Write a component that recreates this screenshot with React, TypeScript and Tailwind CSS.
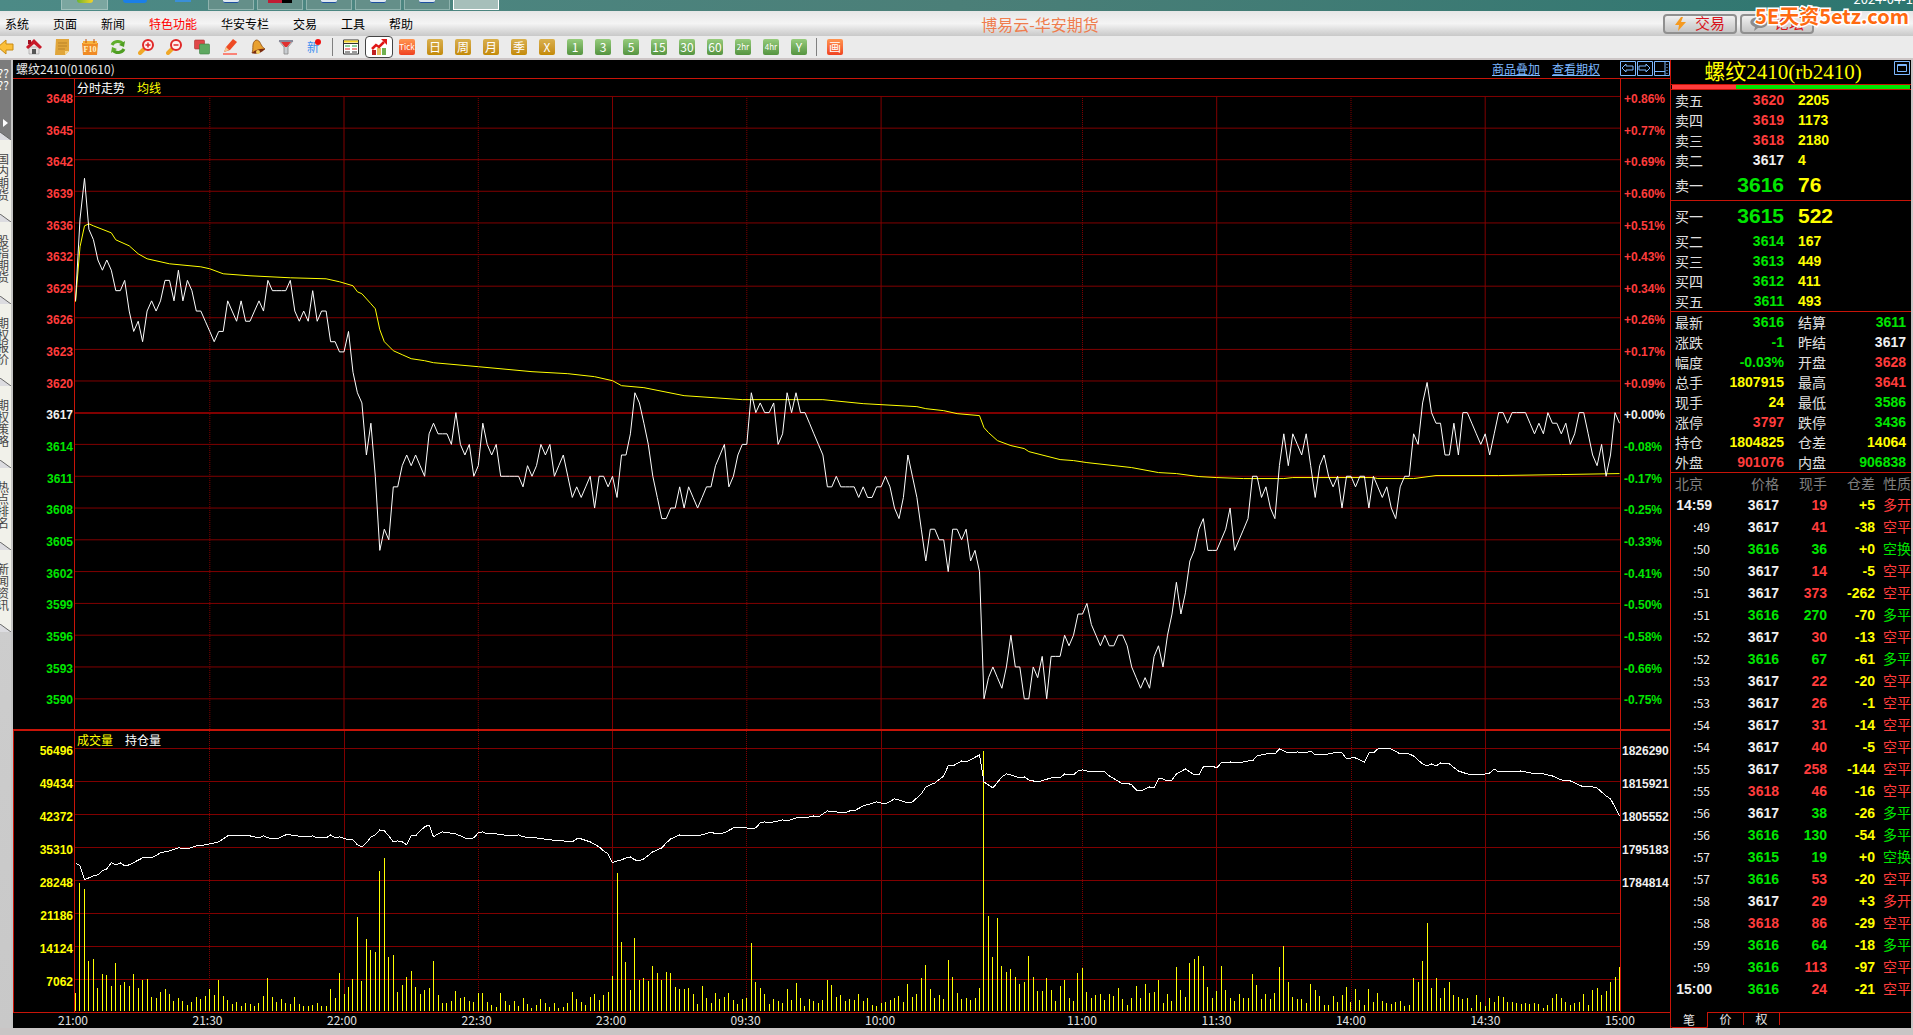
import type { ReactNode } from 'react'
import clsx from 'clsx'

type Tone = 'r' | 'g' | 'w' | 'y'

const tones: Record<Tone, string> = {
  r: 'text-[#ff3c3c]',
  g: 'text-[#00e600]',
  w: 'text-[#f0f0f0]',
  y: 'text-[#ffff00]',
}

// Price per minute, in ticks away from the previous settlement (3617)
const prices = [
  11, 19, 23, 18, 17, 15, 14, 15, 14, 12, 12, 13, 10, 8, 9, 7, 10, 11, 10, 11, 13, 13, 11, 14, 11, 13, 12, 10, 10, 9,
  8, 7, 8, 8, 11, 10, 9, 11, 9, 9, 10, 11, 10, 13, 12, 12, 12, 12, 13, 10, 9, 10, 9, 12, 9, 10, 10, 7, 7, 6,
  6, 8, 4, 2, 1, -4, -1, -6, -13, -11, -12, -7, -7, -5, -4, -5, -4, -5, -6, -2, -1, -2, -2, -2, -3, 0, -3, -4, -3, -6,
  -5, -1, -3, -4, -3, -6, -6, -6, -6, -6, -7, -5, -6, -5, -3, -4, -3, -6, -5, -4, -6, -8, -7, -8, -7, -6, -9, -6, -6, -7,
  -6, -8, -4, -4, -2, 2, 1, -1, -3, -6, -8, -10, -10, -9, -9, -7, -9, -7, -8, -9, -8, -7, -7, -5, -4, -3, -7, -6, -4, -3,
  -3, 2, 0, 1, 0, 0, 1, -3, -2, 2, 0, 2, 0, 0, -1, -2, -3, -4, -7, -7, -6, -7, -7, -7, -7, -8, -7, -8, -8, -7,
  -7, -6, -7, -9, -10, -8, -4, -6, -8, -11, -14, -11, -11, -12, -12, -15, -11, -11, -12, -11, -14, -13, -15, -27, -25,
  -24, -25, -26, -24, -21, -24, -24, -27, -27, -24, -25, -23, -27, -23, -23, -23, -21, -22, -21, -19, -19, -18, -20,
  -21, -22, -21, -22, -22, -21, -21, -22, -24, -25, -26, -25, -26, -23, -22, -24, -21, -19, -16, -19, -17, -14, -13,
  -11, -10, -13, -13, -13, -12, -11, -9, -13, -12, -11, -10, -6, -6, -8, -7, -9, -10, -5, -2, -5, -2, -3, -4, -2, -5,
  -8, -5, -4, -6, -7, -6, -9, -6, -6, -7, -6, -6, -9, -6, -7, -8, -7, -9, -10, -7, -6, -6, -2, -3, 1, 3, 0, -1, -1, -4,
  -4, -1, -4, 0, 0, -1, -2, -3, -2, -4, -2, 0, 0, -1, 0, 0, 0, 0, -1, -2, -1, -2, 0, -1, -1, -2, -1, -3, -2, 0, 0, -2,
  -4, -5, -3, -6, -4, 0, -1,
]

// Running average: [minute, y]
const average: number[][] = [
  [0, 302], [1, 247], [2, 226], [3, 224], [4, 226], [8, 233], [9, 240], [12, 246], [14, 254], [16, 259], [21, 264],
  [28, 267], [30, 269], [33, 274], [39, 276], [48, 278], [56, 279], [59, 282], [62, 286], [63, 292], [64, 294],
  [66, 304], [67, 309], [68, 330], [69, 342], [71, 351], [73, 355], [75, 359], [78, 361], [80, 363], [90, 367],
  [102, 372], [110, 374], [116, 377], [120, 381], [122, 386], [127, 388], [136, 396], [149, 400], [167, 400],
  [176, 404], [188, 407], [190, 409], [194, 411], [197, 414], [202, 416], [203, 428], [204, 433], [206, 441],
  [209, 446], [212, 449], [213, 452], [220, 460], [223, 461], [226, 463], [236, 468], [242, 473], [246, 474],
  [251, 477], [255, 478], [261, 479], [270, 479], [272, 478], [290, 478], [291, 479], [299, 479], [304, 476],
  [318, 476], [332, 475], [345, 474],
]

// Bar height per minute
const volumes = [
  18, 128, 122, 50, 52, 23, 37, 36, 25, 48, 26, 29, 25, 37, 23, 31, 32, 14, 13, 19, 22, 17, 10, 13, 10, 6, 9, 14, 12, 15,
  22, 16, 31, 15, 11, 7, 9, 5, 8, 7, 5, 8, 15, 33, 14, 9, 12, 8, 7, 14, 7, 5, 5, 6, 8, 5, 5, 22, 13, 38,
  17, 24, 32, 94, 30, 72, 61, 59, 140, 153, 54, 56, 19, 26, 34, 40, 24, 17, 21, 23, 50, 16, 8, 8, 10, 20, 13, 14, 10, 9,
  18, 18, 9, 6, 4, 18, 10, 6, 10, 5, 13, 7, 3, 6, 12, 8, 4, 8, 3, 4, 8, 19, 12, 9, 6, 14, 17, 11, 16, 19,
  35, 138, 69, 49, 21, 73, 31, 33, 30, 45, 38, 31, 39, 38, 24, 22, 22, 23, 17, 7, 25, 13, 8, 18, 12, 14, 18, 11, 7, 12,
  13, 68, 29, 23, 17, 7, 12, 10, 8, 22, 11, 28, 13, 5, 12, 10, 8, 11, 31, 26, 14, 16, 10, 12, 11, 17, 10, 13, 6, 5,
  8, 9, 11, 13, 15, 9, 27, 14, 17, 33, 46, 22, 13, 16, 12, 51, 34, 18, 12, 13, 11, 13, 23, 260, 95, 54, 93, 45, 39, 42,
  34, 27, 29, 55, 34, 20, 20, 33, 21, 10, 25, 31, 13, 10, 38, 43, 19, 13, 16, 17, 11, 17, 15, 23, 12, 6, 13, 25, 13, 27,
  18, 19, 31, 8, 17, 10, 44, 21, 14, 48, 52, 55, 45, 24, 13, 20, 45, 21, 13, 10, 17, 13, 13, 37, 26, 12, 17, 12, 18, 44,
  65, 29, 14, 12, 12, 8, 27, 21, 15, 6, 6, 15, 9, 16, 24, 9, 22, 11, 6, 22, 9, 18, 10, 8, 7, 9, 10, 5, 6, 33,
  29, 50, 88, 23, 33, 13, 23, 29, 16, 14, 12, 13, 3, 16, 9, 5, 13, 9, 15, 14, 9, 9, 8, 7, 8, 7, 8, 7, 3, 6,
  13, 17, 13, 9, 6, 8, 9, 17, 6, 21, 23, 16, 20, 29, 34, 44,
]

// Open interest: [minute, y]
const interest: number[][] = [
  [0, 864], [1, 867], [2, 881], [4, 877], [5, 876], [6, 872], [7, 870], [8, 864], [9, 866], [10, 864], [11, 867],
  [12, 866], [15, 859], [17, 859], [19, 854], [21, 852], [23, 849], [25, 850], [27, 847], [29, 846], [32, 843],
  [34, 837], [39, 837], [41, 839], [42, 837], [43, 839], [45, 840], [47, 836], [48, 836], [51, 838], [53, 837],
  [54, 839], [56, 839], [57, 836], [58, 839], [59, 838], [61, 841], [62, 841], [63, 846], [64, 848], [65, 844],
  [66, 838], [67, 836], [68, 831], [69, 832], [70, 837], [71, 843], [72, 842], [73, 843], [74, 846], [75, 837],
  [76, 837], [77, 832], [78, 828], [79, 826], [80, 838], [81, 835], [82, 833], [85, 835], [86, 837], [87, 839],
  [88, 840], [89, 839], [90, 834], [91, 833], [92, 835], [94, 835], [97, 837], [99, 836], [100, 838], [103, 839],
  [106, 841], [109, 842], [111, 843], [112, 840], [113, 840], [115, 843], [117, 848], [118, 852], [119, 855],
  [120, 864], [121, 862], [122, 861], [123, 859], [124, 858], [125, 861], [126, 862], [127, 860], [129, 853],
  [131, 849], [132, 844], [133, 840], [135, 836], [136, 837], [138, 837], [140, 836], [142, 833], [143, 835],
  [145, 834], [147, 829], [150, 829], [151, 830], [152, 829], [153, 824], [154, 823], [155, 824], [158, 821],
  [159, 822], [161, 819], [163, 819], [165, 817], [166, 818], [168, 812], [170, 813], [172, 814], [173, 812],
  [174, 812], [176, 807], [179, 803], [181, 805], [183, 800], [184, 801], [186, 804], [187, 803], [188, 799],
  [189, 795], [190, 788], [192, 784], [194, 777], [195, 767], [196, 767], [198, 762], [199, 763], [202, 756],
  [203, 783], [204, 786], [205, 789], [207, 778], [208, 775], [209, 776], [211, 779], [212, 778], [213, 781],
  [215, 783], [218, 779], [220, 779], [221, 775], [223, 776], [224, 772], [225, 771], [227, 773], [230, 773],
  [231, 777], [234, 785], [235, 784], [236, 786], [237, 791], [238, 792], [240, 788], [241, 789], [242, 780],
  [243, 780], [244, 782], [245, 781], [246, 775], [248, 770], [250, 776], [251, 776], [252, 768], [254, 767],
  [255, 769], [256, 764], [258, 763], [260, 764], [262, 762], [263, 762], [264, 757], [266, 755], [268, 755],
  [269, 750], [271, 754], [273, 753], [275, 754], [276, 752], [277, 756], [279, 756], [281, 754], [283, 754],
  [284, 760], [285, 759], [286, 759], [288, 763], [289, 754], [290, 754], [291, 750], [294, 750], [296, 755],
  [298, 755], [299, 757], [301, 765], [302, 767], [303, 765], [304, 767], [305, 764], [307, 765], [309, 772],
  [311, 775], [314, 776], [316, 774], [317, 770], [318, 773], [321, 773], [323, 772], [325, 774], [328, 775],
  [330, 777], [332, 781], [334, 782], [337, 788], [339, 788], [340, 789], [341, 793], [342, 797], [343, 800],
  [344, 808], [345, 817],
]

const STEP = 1544 / 345
const mx = (m: number) => 0.5 + m * STEP
const priceY = (p: number) => (p > 0 ? 413.5 - p * 10.22 : 413 - p * 10.61)
const toPoints = (d: number[][]) => d.map(([m, y]) => `${mx(m).toFixed(1)},${y}`).join(' ')

const pricePoints = prices.map((p, m) => `${mx(m).toFixed(1)},${priceY(p).toFixed(1)}`).join(' ')

const priceScale = [3648, 3645, 3642, 3639, 3636, 3632, 3629, 3626, 3623, 3620, 3617, 3614, 3611, 3608, 3605, 3602, 3599, 3596, 3593, 3590]
const pctScale = ['+0.86%', '+0.77%', '+0.69%', '+0.60%', '+0.51%', '+0.43%', '+0.34%', '+0.26%', '+0.17%', '+0.09%', '+0.00%', '-0.08%', '-0.17%', '-0.25%', '-0.33%', '-0.41%', '-0.50%', '-0.58%', '-0.66%', '-0.75%']
const volumeScale = [56496, 49434, 42372, 35310, 28248, 21186, 14124, 7062]
const interestScale = ['1826290', '1815921', '1805552', '1795183', '1784814', '', '', '']

const times = [
  { t: '21:00', gap: 0 },
  { t: '21:30', gap: 30 },
  { t: '22:00', gap: 30 },
  { t: '22:30', gap: 30 },
  { t: '23:00', gap: 30 },
  { t: '09:30', gap: 30 },
  { t: '10:00', gap: 30 },
  { t: '11:00', gap: 45 },
  { t: '11:30', gap: 30 },
  { t: '14:00', gap: 30 },
  { t: '14:30', gap: 30 },
  { t: '15:00', gap: 30 },
]

const asks: [string, string, string, Tone][] = [
  ['卖五', '3620', '2205', 'r'],
  ['卖四', '3619', '1173', 'r'],
  ['卖三', '3618', '2180', 'r'],
  ['卖二', '3617', '4', 'w'],
  ['卖一', '3616', '76', 'g'],
]
const bids: [string, string, string, Tone][] = [
  ['买一', '3615', '522', 'g'],
  ['买二', '3614', '167', 'g'],
  ['买三', '3613', '449', 'g'],
  ['买四', '3612', '411', 'g'],
  ['买五', '3611', '493', 'g'],
]

const stats: [string, string, Tone, string, string, Tone][] = [
  ['最新', '3616', 'g', '结算', '3611', 'g'],
  ['涨跌', '-1', 'g', '昨结', '3617', 'w'],
  ['幅度', '-0.03%', 'g', '开盘', '3628', 'r'],
  ['总手', '1807915', 'y', '最高', '3641', 'r'],
  ['现手', '24', 'y', '最低', '3586', 'g'],
  ['涨停', '3797', 'r', '跌停', '3436', 'g'],
  ['持仓', '1804825', 'y', '仓差', '14064', 'y'],
  ['外盘', '901076', 'r', '内盘', '906838', 'g'],
]

const trades: [string, string, Tone, string, Tone, string, string][] = [
  ['14:59', '3617', 'w', '19', 'r', '+5', '多开'],
  [':49', '3617', 'w', '41', 'r', '-38', '空平'],
  [':50', '3616', 'g', '36', 'g', '+0', '空换'],
  [':50', '3617', 'w', '14', 'r', '-5', '空平'],
  [':51', '3617', 'w', '373', 'r', '-262', '空平'],
  [':51', '3616', 'g', '270', 'g', '-70', '多平'],
  [':52', '3617', 'w', '30', 'r', '-13', '空平'],
  [':52', '3616', 'g', '67', 'g', '-61', '多平'],
  [':53', '3617', 'w', '22', 'r', '-20', '空平'],
  [':53', '3617', 'w', '26', 'r', '-1', '空平'],
  [':54', '3617', 'w', '31', 'r', '-14', '空平'],
  [':54', '3617', 'w', '40', 'r', '-5', '空平'],
  [':55', '3617', 'w', '258', 'r', '-144', '空平'],
  [':55', '3618', 'r', '46', 'r', '-16', '空平'],
  [':56', '3617', 'w', '38', 'g', '-26', '多平'],
  [':56', '3616', 'g', '130', 'g', '-54', '多平'],
  [':57', '3615', 'g', '19', 'g', '+0', '空换'],
  [':57', '3616', 'g', '53', 'r', '-20', '空平'],
  [':58', '3617', 'w', '29', 'r', '+3', '多开'],
  [':58', '3618', 'r', '86', 'r', '-29', '空平'],
  [':59', '3616', 'g', '64', 'g', '-18', '多平'],
  [':59', '3616', 'g', '113', 'r', '-97', '空平'],
  ['15:00', '3616', 'g', '24', 'r', '-21', '空平'],
]

const menu = ['系统', '页面', '新闻', '特色功能', '华安专栏', '交易', '工具', '帮助']
const sideTabs = ['国内期货', '股指期货', '期权报价', '期权策略', '热点排名', '新闻资讯']

function Icon({ children }: { children: ReactNode }) {
  return <svg width="16" height="16" viewBox="0 0 16 16" aria-hidden="true">{children}</svg>
}

const drawnTools: { name: string; icon: ReactNode }[] = [
  { name: '后退', icon: <path d="M0 8 8 1v4h7v6H8v4z" fill="#fbbf3a" stroke="#c98a10" /> },
  {
    name: '首页',
    icon: (
      <>
        <path d="M3 8h10v7H3z" fill="#e8e4e4" stroke="#999" strokeWidth=".6" />
        <path d="M0 8 8 0l8 8-2 2-6-5-6 5z" fill="#c81828" />
        <path d="M2 1h3v4H2z" fill="#a01020" />
        <path d="M6 10h4v5H6z" fill="#555" />
      </>
    ),
  },
  {
    name: '公告',
    icon: (
      <>
        <path d="M2 0h13v12l-4 4H1z" fill="#e0a53a" />
        <path d="M4 4h9M4 7h9M4 10h7" stroke="#b98228" />
        <path d="M11 16v-4h4z" fill="#f7d68a" />
      </>
    ),
  },
  {
    name: 'F10',
    icon: (
      <>
        <path d="M0 4h16l-1 12H1z" fill="#f08a24" />
        <path d="M1 2h14v3H1z" fill="#f7b13c" />
        <path d="M4 0v4M12 0v4" stroke="#c05010" />
        <text x="8" y="13" textAnchor="middle" fontSize="8" fontWeight="bold" fill="#fff4c8" fontFamily="Liberation Serif, serif">F10</text>
      </>
    ),
  },
  {
    name: '刷新',
    icon: (
      <>
        <path d="M2 6c2-4 8-5 11-1" fill="none" stroke="#5fae2c" strokeWidth="3" />
        <path d="m15 2-1 6-5-2z" fill="#4f9e22" />
        <path d="M14 10c-2 4-8 5-11 1" fill="none" stroke="#4f9e22" strokeWidth="3" />
        <path d="m1 14 1-6 5 2z" fill="#5fae2c" />
      </>
    ),
  },
  {
    name: '放大',
    icon: (
      <>
        <path d="m2 14 4-4" stroke="#f0a828" strokeWidth="4" strokeLinecap="round" />
        <circle cx="10" cy="6" r="5" fill="#fff0f0" stroke="#e02828" strokeWidth="2" />
        <path d="M7.500 6h5M10 3.500v5" stroke="#e02828" strokeWidth="1.500" />
      </>
    ),
  },
  {
    name: '缩小',
    icon: (
      <>
        <path d="m2 14 4-4" stroke="#f0a828" strokeWidth="4" strokeLinecap="round" />
        <circle cx="10" cy="6" r="5" fill="#fff0f0" stroke="#e02828" strokeWidth="2" />
        <path d="M7.500 6h5" stroke="#e02828" strokeWidth="1.500" />
      </>
    ),
  },
  {
    name: '叠加',
    icon: (
      <>
        <rect x=".5" y="1" width="10" height="9" rx="1" fill="#e04848" stroke="#a83030" strokeWidth=".6" />
        <rect x="5.500" y="5" width="10" height="10" rx="1" fill="#5fa860" stroke="#3d8040" strokeWidth=".6" />
      </>
    ),
  },
  {
    name: '画线',
    icon: (
      <>
        <path d="m2 13 2-5 7-8 4 3-7 8z" fill="#ee4a24" />
        <path d="m2 13 2-5 3 3z" fill="#f5c890" />
        <path d="M1 15h14" stroke="#ff6050" strokeWidth="1.500" />
      </>
    ),
  },
  {
    name: '预警',
    icon: (
      <>
        <path d="M6 1c5 0 4 6 9 9L2 14C4 9 1 4 6 1z" fill="#e8a030" stroke="#8a4a10" strokeWidth=".8" />
        <path d="M2 14c3 2 10 0 13-4-4-1-11 1-13 4z" fill="#7a2c10" />
        <circle cx="8" cy="13" r="2" fill="#f5d060" />
      </>
    ),
  },
  {
    name: '筛选',
    icon: (
      <>
        <path d="M1 2h14L10 8v7H6V8z" fill="#c8ccd0" stroke="#888" strokeWidth=".8" />
        <path d="M3 3h10l-4 5H7z" fill="#e03030" />
        <path d="M1 2h14" stroke="#889" strokeWidth="2" />
      </>
    ),
  },
]

const periods = [
  { t: '日', c: 'gold' }, { t: '周', c: 'gold' }, { t: '月', c: 'gold' }, { t: '季', c: 'gold' }, { t: 'X', c: 'gold' },
  { t: '1', c: 'green' }, { t: '3', c: 'green' }, { t: '5', c: 'green' }, { t: '15', c: 'green' }, { t: '30', c: 'green' },
  { t: '60', c: 'green' }, { t: '2hr', c: 'green' }, { t: '4hr', c: 'green' }, { t: 'Y', c: 'green' },
]

function Badge({ text, color }: { text: string; color: string }) {
  return (
    <button className="flex w-7 justify-center">
      <span
        className={clsx(
          'flex h-4 w-4 items-center justify-center rounded-xs leading-none whitespace-nowrap text-white',
          text.length > 2 ? 'text-[8px]' : 'text-xs',
          color === 'gold' && 'bg-linear-to-b from-[#d9b04c] to-[#c48a00]',
          color === 'green' && 'bg-linear-to-b from-[#96cc7c] to-[#559440]',
          color === 'orange' && 'bg-linear-to-b from-[#ff9450] to-[#f04020]',
        )}
      >
        {text}
      </span>
    </button>
  )
}

function Taskbar() {
  return (
    <div className="flex h-[11px] items-start gap-[3px] overflow-hidden bg-linear-to-r from-[#4c8a86] via-[#4b7f78] to-[#2c7670] pl-[61px]">
      <div className="flex h-[10px] w-[47px] justify-center border border-t-0 border-[#9fc0bb] bg-[#7ba6a0]">
        <span className="h-[3px] w-4 rounded-b-full bg-linear-to-r from-[#6bb52c] to-[#f5d328]" />
      </div>
      <div className="flex w-[94px] items-start gap-7 pl-3">
        <span className="h-[3px] w-6 rounded-b-full bg-[#1b7fe8]" />
        <span className="h-[2px] w-4 bg-[#3a8fd8]" />
      </div>
      {[0, 1, 2, 3, 4].map(i => (
        <div key={i} className="flex h-[10px] w-[46px] shrink-0 justify-center border border-t-0 border-[#8fb3ae] bg-[#648f89]">
          <span className={clsx('h-[3px]', i === 1 ? 'w-6 bg-linear-to-r from-[#c01c34] from-60% to-black to-60%' : 'w-4 rounded-b-xs border-b border-[#1d4fa0] bg-[#dfe8f0]')} />
        </div>
      ))}
      <div className="h-[10px] w-[46px] border border-t-0 border-white bg-[#a6bfba]" />
      <span className="-mt-[9px] ml-auto text-[13px] leading-4 whitespace-nowrap text-white">2024-04-1</span>
    </div>
  )
}

function MenuBar() {
  return (
    <header className="relative flex h-[25px] items-center bg-linear-to-b from-[#e6e6e6] via-[#f4f4f4] to-[#c8c8c8] pl-[5px]">
      <nav className="flex gap-6 text-xs">
        {menu.map(m => (
          <button key={m} className={m === '特色功能' ? 'text-[#f00]' : 'text-black'}>{m}</button>
        ))}
      </nav>
      <h1 className="flex-1 pl-1 text-center text-base leading-6 text-[#ef7d4e]">博易云-华安期货</h1>
      <div className="mr-[99px] flex gap-[3px]">
        <button className="flex h-5 w-[74px] items-center justify-center gap-2 rounded border-2 border-[#909090] bg-linear-to-b from-[#f0f0f0] to-[#c4c4c4] text-[15px] text-[#d8141c]">
          <svg width="12" height="14" viewBox="0 0 12 14" aria-hidden="true"><path d="M6 0 0 8h4l-1 6 8-9H6l2-5z" fill="#f59a20" /></svg>
          交易
        </button>
        <button className="flex h-5 w-[74px] items-center justify-center gap-1.5 rounded border-2 border-[#909090] bg-linear-to-b from-[#f0f0f0] to-[#c4c4c4] text-[15px] text-[#d8141c]">
          <svg width="18" height="14" viewBox="0 0 18 14" aria-hidden="true">
            <path d="M9 0c12 0 11 11 1 11H8l-4 3 1-4C-3 7 0 0 9 0z" fill="#8c8c8c" />
            <path d="M5 6h2M8 6h2M11 6h2" stroke="#fff" strokeWidth="2" />
          </svg>
          论坛
        </button>
      </div>
      <div className="absolute -top-[9px] right-1 text-[20px] leading-[28px] font-bold whitespace-nowrap text-[#ff6a10] [paint-order:stroke] [-webkit-text-stroke:3px_#fff]">
        5E天资5etz.com
      </div>
    </header>
  )
}

function Toolbar() {
  return (
    <div className="flex h-6 items-center overflow-hidden border-b-2 border-[#cdc6c6] bg-[#ebebeb]">
      <div className="-ml-2 flex items-center">
        {drawnTools.map(t => (
          <button key={t.name} aria-label={t.name} className="flex w-7 justify-center"><Icon>{t.icon}</Icon></button>
        ))}
        <button className="flex w-7 justify-center">
          <span className="flex text-xs leading-4 text-[#3c8ef0]">
            新<span className="-ml-1 h-1.5 w-1.5 rounded-full bg-[#f01010]" />
          </span>
        </button>
        <div className="mx-1 h-[18px] w-px bg-[#808080]" />
        <button aria-label="报价" className="flex w-7 justify-center">
          <Icon>
            <path d="M.500 1h15v14H.500z" fill="#fff" stroke="#333" />
            <path d="M1 1.500h14v2H1z" fill="#f5d328" />
            <path d="M2 7h5M9 7h5" stroke="#18a030" />
            <path d="M2 10h5M9 10h5" stroke="#e02020" />
            <path d="M2 13h5M9 13h5M1 4.500h14" stroke="#333" />
          </Icon>
        </button>
        <button aria-label="分时" className="flex h-[22px] w-7 items-center justify-center rounded border border-[#444] bg-white">
          <Icon>
            <path d="M1 11h4v5H1z" fill="#c02020" />
            <path d="M6 9h4v7H6z" fill="#e8c060" />
            <path d="M11 9h4v7h-4z" fill="#70b050" />
            <path d="m1 10 4-4 3 2 5-5" fill="none" stroke="#e01818" strokeWidth="2.500" />
            <path d="M10 0h6v6z" fill="#e01818" />
          </Icon>
        </button>
        <Badge text="Tick" color="orange" />
        {periods.map(p => <Badge key={p.t} text={p.t} color={p.c} />)}
        <div className="mr-1 ml-[3px] h-[18px] w-px bg-[#808080]" />
        <Badge text="画" color="orange" />
      </div>
    </div>
  )
}

function SideTabs() {
  return (
    <aside className="w-[13px] shrink-0 overflow-hidden border-r-2 border-[#c4c4c4] bg-linear-to-b from-[#d4d4d4] to-[#c8c8c8] text-xs leading-3">
      <div className="relative flex h-20 flex-col items-end bg-[#7c7c7c] pt-[7px] pr-0.5 text-white">
        <span>??</span>
        <span>??</span>
        <svg className="mt-7" width="7" height="8" viewBox="0 0 7 8" aria-hidden="true"><path d="M1 0v8l5-4z" fill="#fff" /></svg>
        <TabEdge />
      </div>
      {sideTabs.map(t => (
        <button key={t} className="relative block h-[82px] w-full bg-[#f1f1ea] pb-2 text-[#444]">
          <span className="-ml-[3px] block w-3 break-all">{t}</span>
          <TabEdge />
        </button>
      ))}
    </aside>
  )
}

function TabEdge() {
  return (
    <svg className="absolute bottom-0 left-0" width="11" height="8" viewBox="0 0 11 8" aria-hidden="true">
      <path d="M0 0v8h11z" fill="#dcdce0" />
      <path d="M0 0l11 8" stroke="#666" />
    </svg>
  )
}

function GridColumns({ top, bottom }: { top: number; bottom: number }) {
  let m = 0
  return (
    <>
      {times.slice(1, -1).map(({ t, gap }, i) => {
        m += gap
        return <path key={t} d={`M${mx(m).toFixed(1)} ${top}V${bottom}`} strokeDasharray={i === 6 || (i < 6 && i % 2 === 0) || i === 8 ? '1 1' : undefined} />
      })}
    </>
  )
}

function AxisLabels({ items, className }: { items: (string | number)[]; className: string }) {
  return (
    <div className={clsx('flex shrink-0 flex-col justify-between font-[Liberation_Sans,sans-serif] text-xs leading-4 font-bold', className)}>
      {items.map((v, i) => <span key={i} className="h-4">{v}</span>)}
    </div>
  )
}

function priceTone(i: number) {
  return i < 10 ? tones.r : i === 10 ? tones.w : tones.g
}

function ToneLabels({ items, className }: { items: (string | number)[]; className: string }) {
  return (
    <div className={clsx('flex shrink-0 flex-col justify-between pt-3 pb-[21px] font-[Liberation_Sans,sans-serif] text-xs leading-4 font-bold', className)}>
      {items.map((v, i) => <span key={v} className={priceTone(i)}>{v}</span>)}
    </div>
  )
}

function PriceChart() {
  return (
    <section className="flex flex-[651_1_0px] border-b-2 border-[#c81408]">
      <ToneLabels items={priceScale} className="w-[61px] pr-px text-right" />
      <div className="relative flex-1 border-x border-[#c81408]">
        <svg className="absolute inset-0 h-full w-full" viewBox="0 79 1545 651" preserveAspectRatio="none" shapeRendering="crispEdges" role="img" aria-label="分时走势">
          <g stroke="#800000" fill="none" className="*:[vector-effect:non-scaling-stroke]">
            {priceScale.map((p, i) => {
              const y = i <= 10 ? 96.5 + i * 31.65 : 413 + (i - 10) * 31.83
              return <path key={p} d={`M0 ${y.toFixed(1)}H1545`} strokeWidth={p === 3617 ? 2 : 1} />
            })}
            <GridColumns top={96} bottom={730} />
          </g>
          <polyline points={toPoints(average)} fill="none" stroke="#ff0" vectorEffect="non-scaling-stroke" />
          <polyline points={pricePoints} fill="none" stroke="#fff" vectorEffect="non-scaling-stroke" />
        </svg>
        <div className="absolute top-0 left-0.5 flex gap-3 text-xs leading-[18px] text-white">
          <span>分时走势</span>
          <span className="text-[#ff0]">均线</span>
        </div>
      </div>
      <ToneLabels items={pctScale} className="w-[49px] pl-[3px]" />
    </section>
  )
}

function VolumeChart() {
  return (
    <section className="flex flex-[281_1_0px] border-b border-l border-[#c81408]">
      <AxisLabels items={volumeScale} className="w-[60px] pt-3 pr-px pb-[22px] text-right text-[#ff0]" />
      <div className="relative flex-1 border-x border-[#c81408]">
        <svg className="absolute inset-0 h-full w-full" viewBox="0 732 1545 281" preserveAspectRatio="none" shapeRendering="crispEdges" role="img" aria-label="成交量">
          <g stroke="#800000" fill="none" className="*:[vector-effect:non-scaling-stroke]">
            {volumeScale.map((v, i) => <path key={v} d={`M0 ${749.5 + i * 33}H1545`} />)}
            <GridColumns top={732} bottom={1013} />
          </g>
          {volumes.map((h, m) => (
            <path key={m} d={`M${Math.floor(mx(m)) + 0.5} 1012V${1012 - h}`} stroke="#ff0" vectorEffect="non-scaling-stroke" />
          ))}
          <polyline points={toPoints(interest)} fill="none" stroke="#fff" vectorEffect="non-scaling-stroke" />
        </svg>
        <div className="absolute top-0 left-0.5 flex gap-3 text-xs leading-[18px] text-white">
          <span className="text-[#ff0]">成交量</span>
          <span>持仓量</span>
        </div>
      </div>
      <AxisLabels items={interestScale} className="w-[49px] pt-3 pb-[22px] pl-px text-[#f0f0f0]" />
    </section>
  )
}

function TimeAxis() {
  return (
    <div className="flex h-[15px] pr-[50px] pl-[60px] text-xs leading-[13px] text-[#e0e0e0]">
      {times.map(({ t, gap }) => (
        <div key={t} className="flex justify-end" style={{ flex: `${gap} 1 0px` }}>
          <span className="flex w-0 justify-center">{t}</span>
        </div>
      ))}
    </div>
  )
}

function ChartPane() {
  return (
    <main className="flex min-w-0 flex-1 flex-col">
      <div className="flex h-[19px] items-center border-b border-[#c81408] pb-px pl-[3px] text-xs text-[#e8e8e8]">
        <h2>螺纹2410(010610)</h2>
        <div className="mr-5 ml-auto flex gap-3 text-[#7db8ff] underline">
          <a href="#overlay">商品叠加</a>
          <a href="#options">查看期权</a>
        </div>
        <div className="flex gap-px">
          {['M2 7l4-4v2h7v4H6v2z', 'M13 7 9 3v2H2v4h7v2z', 'M0 10.500h11M11 0v14M13 3v1M13 6v1M13 9v1M13 12v1'].map((d, i) => (
            <button key={d} aria-label={['左移', '右移', '布局'][i]}>
              <svg width="16" height="15" viewBox="0 0 16 15" fill="none" stroke="#7db8ff" aria-hidden="true">
                <path d="M.500.500h15v14H.500z" />
                <path d={d} />
              </svg>
            </button>
          ))}
        </div>
      </div>
      <PriceChart />
      <VolumeChart />
      <TimeAxis />
    </main>
  )
}

function BookSide({ rows }: { rows: [string, string, string, Tone][] }) {
  return (
    <table className="w-full table-fixed border-b border-[#c81408] text-sm">
      <tbody>
        {rows.map(([label, price, qty, tone]) => {
          const best = label.endsWith('一')
          return (
            <tr key={label} className={best ? 'h-[30px]' : 'h-5'}>
              <th className="w-[42px] p-0 pl-1 text-left leading-5 font-normal text-[#e0e0e0]">{label}</th>
              <td className={clsx('w-[71px] p-0 text-right font-[Liberation_Sans,sans-serif] leading-5 font-bold', best && 'text-[21px]', tones[tone])}>{price}</td>
              <td className={clsx('p-0 pl-3.5 font-[Liberation_Sans,sans-serif] leading-5 font-bold text-[#ff0]', best && 'text-[21px]')}>{qty}</td>
            </tr>
          )
        })}
      </tbody>
    </table>
  )
}

function QuotePane() {
  return (
    <aside className="flex w-[241px] shrink-0 flex-col border-l border-[#c81408]">
      <div className="relative h-6">
        <h2 className="pr-4 text-center font-[Liberation_Serif,Noto_Sans_CJK_SC,serif] text-[21px] leading-6 text-[#ff0]">螺纹2410(rb2410)</h2>
        <button aria-label="最大化" className="absolute top-px right-px">
          <svg width="16" height="14" viewBox="0 0 16 14" fill="none" stroke="#7db8ff" aria-hidden="true">
            <path d="M.500.500h15v13H.500zM3.500 3.500h9v7h-9zM3.500 4.500h9" />
          </svg>
        </button>
      </div>
      <div className="flex h-1.5 border-y border-[#c81408] px-px">
        <div className="w-[27%] bg-[#ff3c3c]" />
        <div className="flex-1 bg-[#00e600]" />
      </div>
      <BookSide rows={asks} />
      <BookSide rows={bids} />
      <table className="w-full table-fixed border-b border-[#c81408] text-sm">
        <tbody>
          {stats.map(([a, av, at, b, bv, bt]) => (
            <tr key={a} className="h-5">
              <th className="w-[42px] p-0 pl-1 text-left leading-5 font-normal text-[#e0e0e0]">{a}</th>
              <td className={clsx('w-[71px] p-0 text-right font-[Liberation_Sans,sans-serif] leading-5 font-bold', tones[at])}>{av}</td>
              <th className="w-14 p-0 pl-3.5 text-left leading-5 font-normal text-[#e0e0e0]">{b}</th>
              <td className={clsx('p-0 pr-[5px] text-right font-[Liberation_Sans,sans-serif] leading-5 font-bold', tones[bt])}>{bv}</td>
            </tr>
          ))}
        </tbody>
      </table>
      <table className="w-full table-fixed text-right text-sm">
        <thead>
          <tr className="h-[21px] text-[#808080]">
            <th className="w-[42px] p-0 pl-1 text-left leading-5 font-normal">北京</th>
            <th className="p-0 leading-5 font-normal">价格</th>
            <th className="w-12 p-0 leading-5 font-normal">现手</th>
            <th className="w-12 p-0 leading-5 font-normal">仓差</th>
            <th className="w-9 p-0 leading-5 font-normal">性质</th>
          </tr>
        </thead>
        <tbody className="font-[Liberation_Sans,Noto_Sans_CJK_SC,sans-serif] font-bold">
          {trades.map(([time, price, pt, qty, qt, diff, kind], i) => (
            <tr key={i} className="h-[22px] leading-5">
              <td className={clsx('p-0 text-[#f0f0f0]', time.length < 5 ? 'pr-[3px] font-[Noto_Sans_CJK_SC,sans-serif] text-xs font-normal' : 'pr-px')}>{time}</td>
              <td className={clsx('p-0', tones[pt])}>{price}</td>
              <td className={clsx('p-0', tones[qt])}>{qty}</td>
              <td className="p-0 text-[#ff0]">{diff}</td>
              <td className={clsx('p-0 font-normal', kind === '空换' || kind === '多平' ? tones.g : tones.r)}>{kind}</td>
            </tr>
          ))}
        </tbody>
      </table>
      <div className="mt-auto flex h-4 text-xs leading-[15px] text-[#e8e8e8]">
        <button className="w-[37px] rounded-b-xs border-r border-b border-[#c81408]">笔</button>
        <div className="flex flex-1 items-start border-t border-[#c81408]">
          <button className="h-3 w-9 border-r border-[#c81408] leading-3">价</button>
          <button className="h-3 w-9 border-r border-[#c81408] leading-3">权</button>
        </div>
      </div>
    </aside>
  )
}

export default function App() {
  return (
    <div className="flex min-h-screen flex-col bg-[#c9c5c5] font-[Noto_Sans_CJK_SC,sans-serif]">
      <Taskbar />
      <MenuBar />
      <Toolbar />
      <div className="flex flex-1 pr-0.5">
        <SideTabs />
        <div className="flex min-w-0 flex-1 bg-black">
          <ChartPane />
          <QuotePane />
        </div>
      </div>
      <div className="h-[7px]" />
    </div>
  )
}
